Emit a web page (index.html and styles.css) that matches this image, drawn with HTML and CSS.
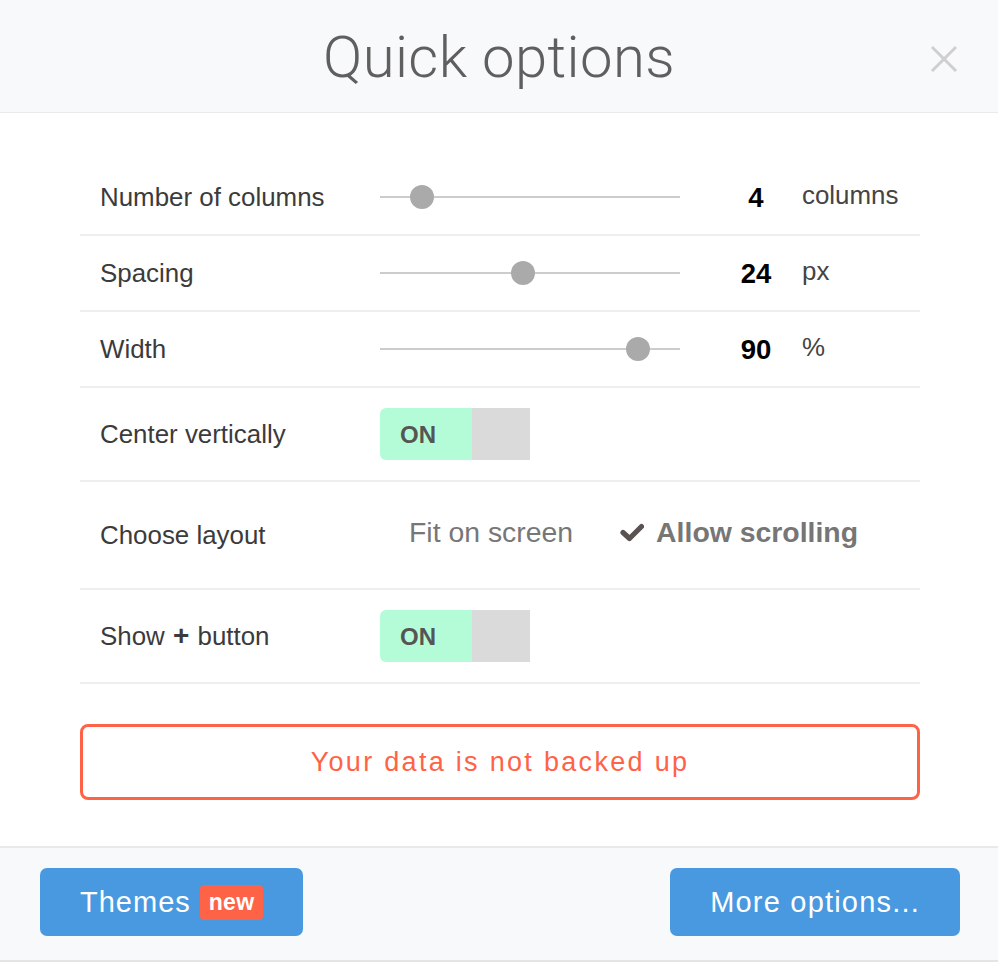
FILE: index.html
```html
<!DOCTYPE html>
<html>
<head>
<meta charset="utf-8">
<link rel="stylesheet" href="styles.css">
</head>
<body>
<div class="modal">
  <header class="header">
    <h1 class="title">Quick options</h1>
    <button class="close" aria-label="Close">
      <svg width="28" height="28" viewBox="0 0 28 28"><path d="M2 2 L26 26 M26 2 L2 26" stroke="#cfcfcf" stroke-width="3" fill="none"/></svg>
    </button>
  </header>

  <main class="content">
    <div class="row slider-row">
      <div class="label">Number of columns</div>
      <div class="slider"><div class="track"></div><div class="thumb" style="left:30px"></div></div>
      <div class="value">4</div>
      <div class="unit">columns</div>
    </div>
    <div class="row slider-row">
      <div class="label">Spacing</div>
      <div class="slider"><div class="track"></div><div class="thumb" style="left:131px"></div></div>
      <div class="value">24</div>
      <div class="unit">px</div>
    </div>
    <div class="row slider-row">
      <div class="label">Width</div>
      <div class="slider"><div class="track"></div><div class="thumb" style="left:246px"></div></div>
      <div class="value">90</div>
      <div class="unit">%</div>
    </div>
    <div class="row toggle-row">
      <div class="label">Center vertically</div>
      <div class="toggle"><span class="toggle-on">ON</span><span class="toggle-off"></span></div>
    </div>
    <div class="row layout-row">
      <div class="label">Choose layout</div>
      <div class="options">
        <span class="option">Fit on screen</span>
        <span class="option selected">
          <svg class="check" width="24" height="19" viewBox="0 0 24 19"><path d="M3 9.5 L9.5 15.5 L21.5 3.5" stroke="#5a5151" stroke-width="5.2" fill="none" stroke-linejoin="round" stroke-linecap="round"/></svg>
          Allow scrolling
        </span>
      </div>
    </div>
    <div class="row toggle-row">
      <div class="label">Show <b class="plus">+</b> button</div>
      <div class="toggle"><span class="toggle-on">ON</span><span class="toggle-off"></span></div>
    </div>

    <div class="alert">Your data is not backed up</div>
  </main>

  <footer class="footer">
    <button class="btn">Themes <span class="badge">new</span></button>
    <button class="btn btn-more">More options...</button>
  </footer>
</div>
</body>
</html>
```

FILE: styles.css
```css
* { box-sizing: border-box; }
html, body { margin: 0; padding: 0; background: #ffffff; }
body { font-family: "Liberation Sans", Arial, sans-serif; }

.modal {
  width: 998px;
  height: 962px;
  display: flex;
  flex-direction: column;
  background: #ffffff;
}

.header {
  position: relative;
  height: 113px;
  background: #f8f9fa;
  border-bottom: 1px solid #e9eaeb;
  display: flex;
  align-items: center;
  justify-content: center;
}
.title {
  margin: 0;
  padding-top: 2px;
  font-family: Roboto, "Liberation Sans", sans-serif;
  font-weight: 300;
  font-size: 58px;
  color: #5f5f5f;
  letter-spacing: 0.4px;
}
.close {
  position: absolute;
  right: 40px;
  top: 45px;
  width: 28px;
  height: 28px;
  padding: 0;
  border: 0;
  background: transparent;
  display: flex;
}

.content {
  flex: 1;
  padding: 47px 78px 0 80px;
}

.row {
  display: flex;
  align-items: center;
  border-bottom: 2px solid #eeeeee;
  color: #3b3b3b;
  font-size: 25.9px;
}
.slider-row { height: 76px; }
.toggle-row { height: 94px; }
.layout-row { height: 108px; }

.label {
  width: 300px;
  padding-left: 20px;
}
.plus { font-weight: bold; font-size: 28px; margin: 0 1px; }

.slider {
  position: relative;
  width: 300px;
  height: 24px;
  display: flex;
  align-items: center;
}
.track {
  width: 100%;
  height: 2px;
  background: #cccccc;
}
.thumb {
  position: absolute;
  top: 0;
  width: 24px;
  height: 24px;
  border-radius: 50%;
  background: #aaaaaa;
}
.value {
  width: 72px;
  margin-left: 40px;
  text-align: center;
  font-weight: bold;
  font-size: 27.5px;
  color: #000000;
  padding-top: 2px;
}
.unit {
  margin-left: 10px;
  color: #444444;
  margin-top: -3px;
}

.toggle {
  display: flex;
  width: 150px;
  height: 52px;
  border-radius: 6px 0 0 6px;
  overflow: hidden;
}
.toggle-on {
  width: 92px;
  background: #b4fcd8;
  color: #555555;
  font-weight: bold;
  font-size: 24px;
  display: flex;
  align-items: center;
  padding-left: 20px;
  padding-top: 2px;
}
.toggle-off {
  flex: 1;
  background: #dadada;
}

.options {
  display: flex;
  align-items: center;
  font-size: 28.4px;
  color: #777777;
  margin-top: -5px;
}
.option { display: flex; align-items: center; }
.option:first-child { margin-left: 29px; }
.option.selected {
  margin-left: 47px;
  font-weight: bold;
  color: #767676;
}
.check { margin-right: 12px; margin-top: -1px; }

.alert {
  margin-top: 40px;
  height: 76px;
  border: 3px solid #ff6347;
  border-radius: 8px;
  color: #ff6347;
  font-size: 27px;
  letter-spacing: 2.3px;
  display: flex;
  align-items: center;
  justify-content: center;
}

.footer {
  height: 116px;
  background: #f8f9fa;
  border-top: 2px solid #e8e9ea;
  border-bottom: 2px solid #e4e4e4;
  display: flex;
  justify-content: space-between;
  align-items: flex-start;
  padding: 20px 38px 0 40px;
}
.btn {
  height: 68px;
  padding: 0 40px;
  border: 0;
  border-radius: 7px;
  background: #4899e0;
  color: #ffffff;
  font-family: "Liberation Sans", Arial, sans-serif;
  font-size: 29px;
  letter-spacing: 1px;
  display: flex;
  align-items: center;
}
.btn-more { letter-spacing: 1.2px; }
.badge {
  margin-left: 9px;
  height: 35px;
  padding: 0 9px;
  border-radius: 4px;
  background: #ff6347;
  color: #ffffff;
  font-weight: bold;
  font-size: 23px;
  letter-spacing: 0.3px;
  display: flex;
  align-items: center;
}
```
